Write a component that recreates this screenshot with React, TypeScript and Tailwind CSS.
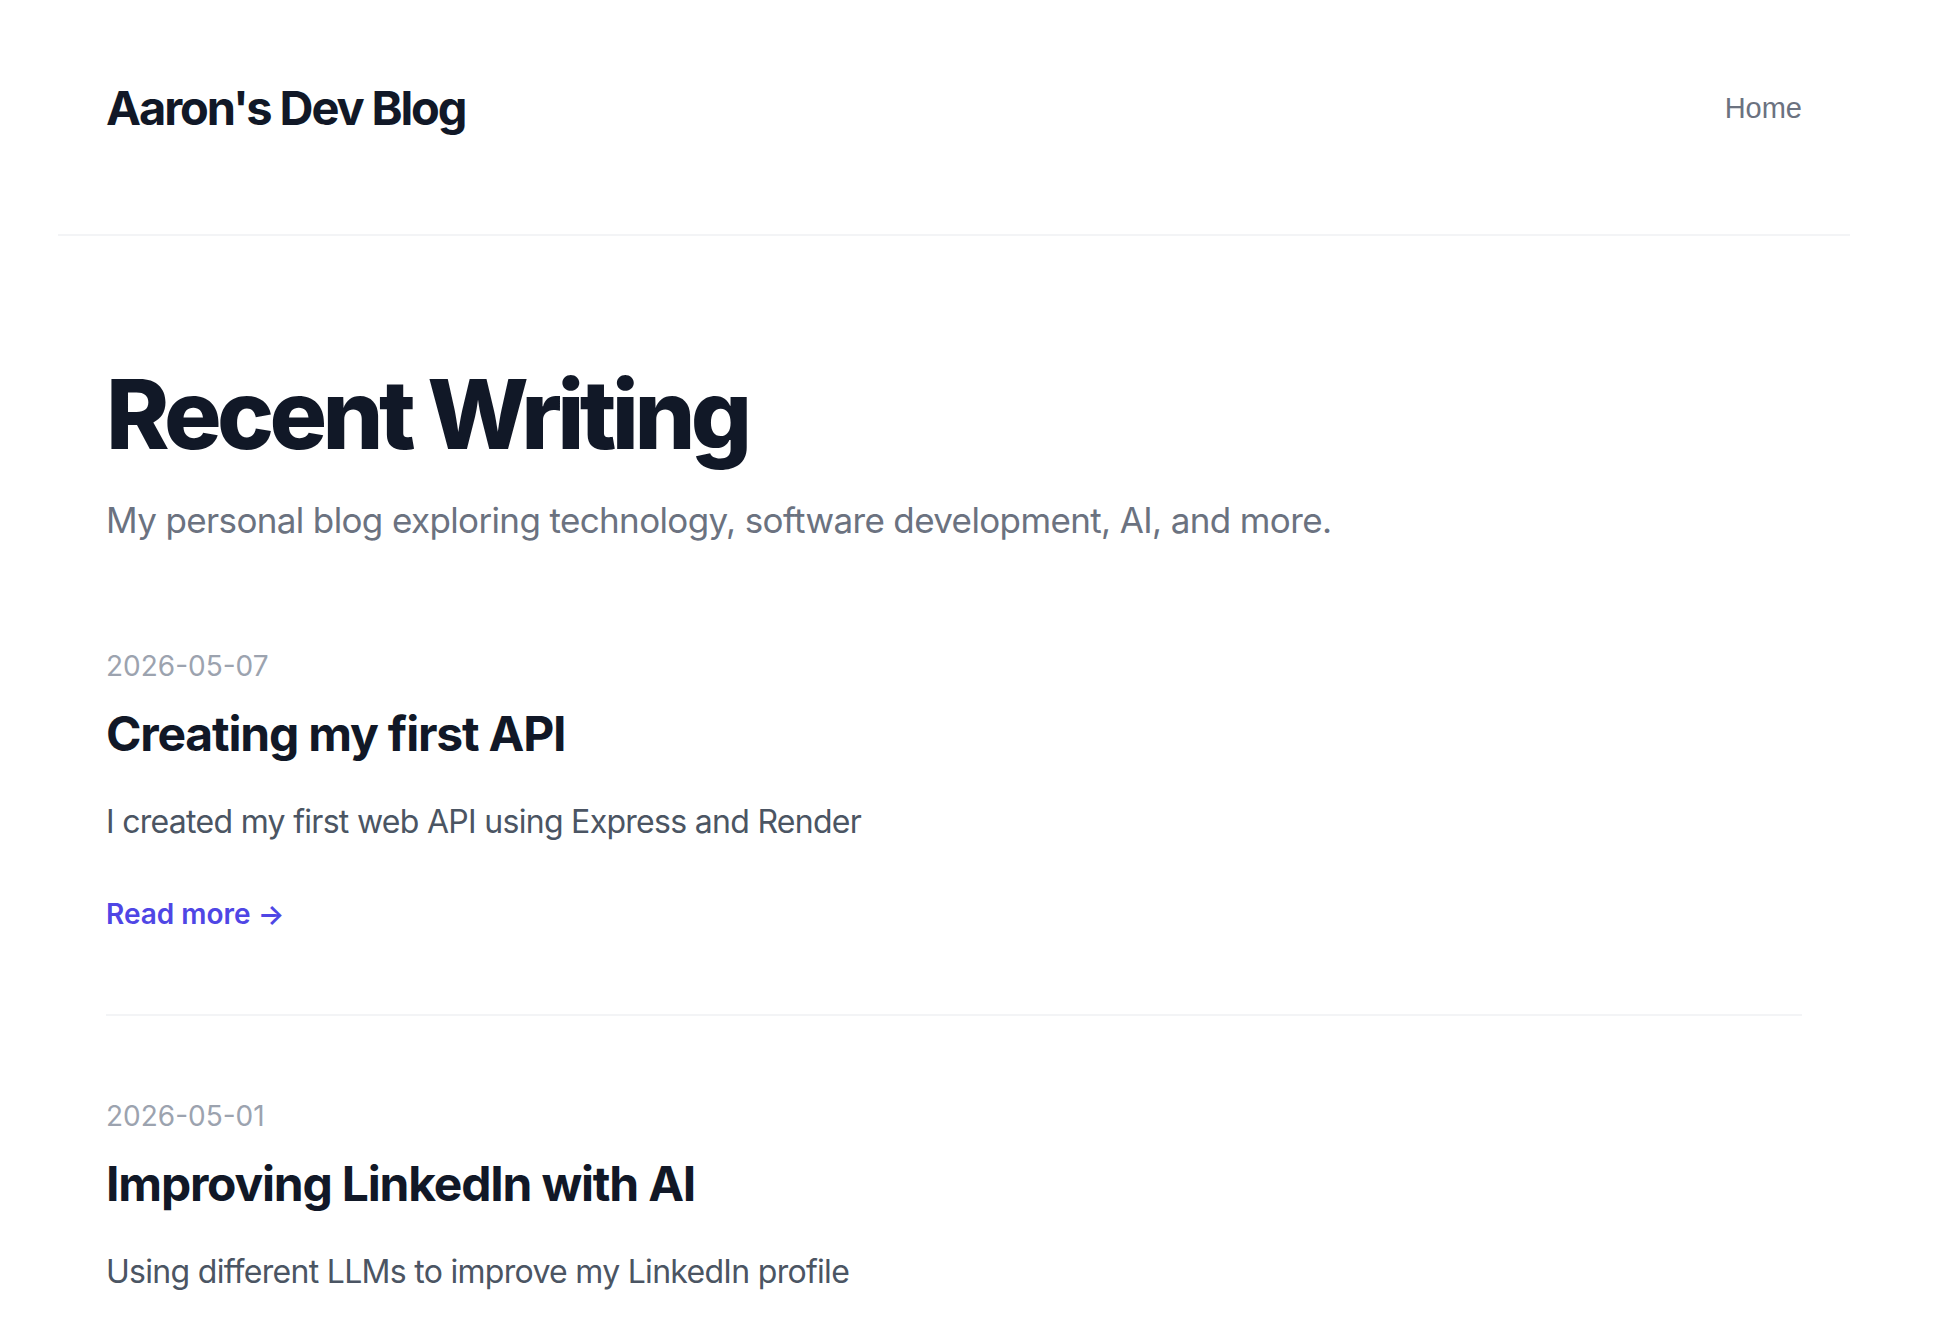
const posts = [
  {
    date: '2026-05-07',
    title: 'Creating my first API',
    summary: 'I created my first web API using Express and Render',
  },
  {
    date: '2026-05-01',
    title: 'Improving LinkedIn with AI',
    summary: 'Using different LLMs to improve my LinkedIn profile',
  },
]

export default function App() {
  return (
    <div className="min-h-screen w-[1908px] bg-white font-['Inter',sans-serif] text-[#111827]">
      {/* Header */}
      <header className="max-w-[1792px] mx-auto px-[48px] pt-[76px] pb-[94px] flex items-center justify-between border-b-2 border-[#f3f4f6]">
        <a href="#" className="text-[47px] leading-[64px] font-bold tracking-[-0.045em] text-[#111827]">
          Aaron's Dev Blog
        </a>
        <nav>
          <a href="#" className="font-['Liberation_Sans',Arial,sans-serif] text-[29px] leading-[40px] text-[#6b7280]">
            Home
          </a>
        </nav>
      </header>

      {/* Main */}
      <main className="max-w-[1792px] mx-auto px-[48px] pt-[130px]">
        <section>
          <h1 className="text-[96px] leading-none font-extrabold tracking-[-0.048em] text-[#111827]">
            Recent Writing
          </h1>
          <p className="mt-[30px] text-[35px] leading-[56px] tracking-[-0.018em] text-[#6b7280]">
            My personal blog exploring technology, software development, AI, and more.
          </p>
        </section>

        <div className="mt-[18px] flex flex-col">
          {posts.map((post) => (
            <article key={post.date} className="py-[80px] border-b-2 border-[#f3f4f6]">
              <time className="block text-[28px] leading-[40px] text-[#9ca3af]">{post.date}</time>
              <h2 className="mt-[16px] text-[48px] leading-[64px] font-bold tracking-tight text-[#111827]">
                {post.title}
              </h2>
              <p className="mt-[32px] text-[32px] leading-[48px] tracking-[-0.022em] text-[#4b5563]">
                {post.summary}
              </p>
              <a href="#" className="mt-[48px] inline-block text-[28px] leading-[40px] font-semibold text-[#4f46e5]">
                Read more →
              </a>
            </article>
          ))}
        </div>
      </main>
    </div>
  )
}
